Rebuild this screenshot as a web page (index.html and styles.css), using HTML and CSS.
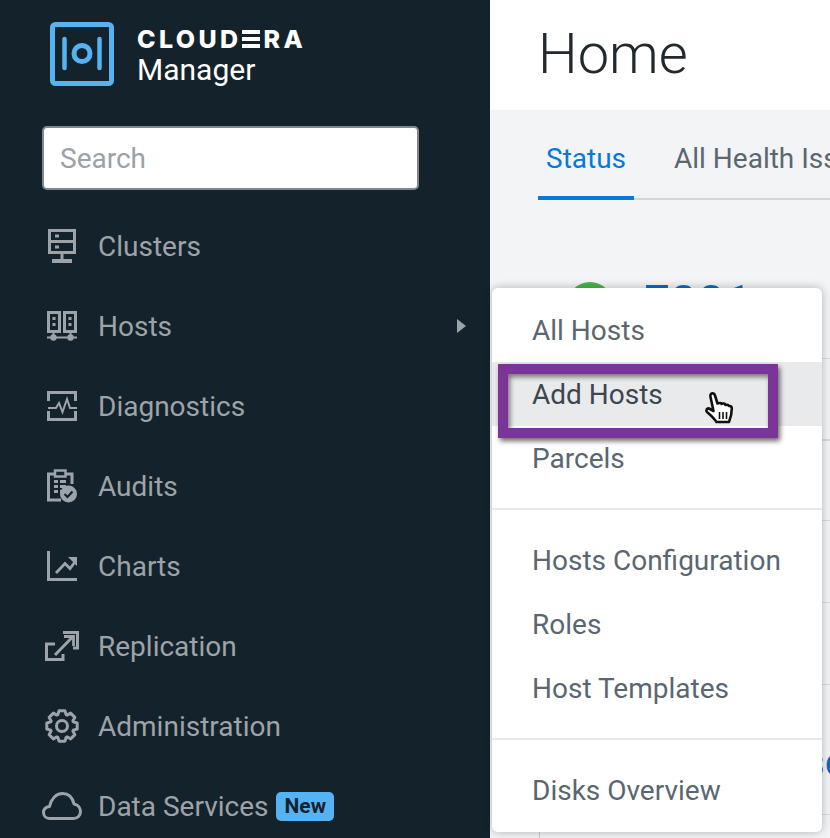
FILE: index.html
```html
<!DOCTYPE html>
<html lang="en">
<head>
  <meta charset="UTF-8" />
  <title>Cloudera Manager - Home</title>
  <link rel="stylesheet" href="styles.css">
</head>
<body>
  <div class="app">
    <aside class="sidebar">
      <div class="brand">
        <svg class="brand-logo" width="64" height="64" viewBox="0 0 64 64">
          <rect x="2.5" y="2.500" width="59" height="59" rx="3" fill="none" stroke="#55b3f3" stroke-width="5"/>
          <path d="M14.500 17v29M49.500 17v29" fill="none" stroke="#55b3f3" stroke-width="4.500" stroke-linecap="round"/>
          <circle cx="32" cy="31.500" r="8" fill="none" stroke="#55b3f3" stroke-width="5"/>
        </svg>
        <div class="brand-text">
          <div class="brand-name">CLOUD<span class="brand-e">E</span>RA</div>
          <div class="brand-product">Manager</div>
        </div>
      </div>

      <div class="search">Search</div>

      <nav class="nav">
        <a class="nav-item">
          <span class="nav-icon">
            <svg viewBox="0 0 28 34" width="28" height="34">
              <path d="M1.500 1.500h25v11h-25zM1.500 12.500h25v11h-25z" fill="none" stroke="#9da3a9" stroke-width="3"/>
              <path d="M14 24v7" fill="none" stroke="#9da3a9" stroke-width="3"/>
              <path d="M4 30h20v4H4z" fill="#9da3a9"/>
              <path d="M7 5.500h4v3H7zM7 16.500h4v3H7z" fill="#9da3a9"/>
            </svg>
          </span>
          <span>Clusters</span>
        </a>
        <a class="nav-item">
          <span class="nav-icon">
            <svg viewBox="0 0 30 30" width="30" height="30">
              <path d="M1.500 1.500h11v19h-11zM17.500 1.500h11v19h-11z" fill="none" stroke="#9da3a9" stroke-width="3"/>
              <path d="M5.500 6h3v3h-3zM5.500 12h3v3h-3zM21.500 6h3v3h-3zM21.500 12h3v3h-3z" fill="#9da3a9"/>
              <path d="M0 26.500h30M6.500 21v6M23.500 21v6" stroke="#9da3a9" stroke-width="2"/>
              <circle cx="6.500" cy="26.500" r="3.200" fill="#9da3a9"/>
              <circle cx="23.500" cy="26.500" r="3.200" fill="#9da3a9"/>
            </svg>
          </span>
          <span>Hosts</span>
          <span class="nav-arrow"></span>
        </a>
        <a class="nav-item">
          <span class="nav-icon">
            <svg viewBox="0 0 30 30" width="30" height="30">
              <path d="M1.500 10V1.500h27V10M1.500 20v8.500h27V20" fill="none" stroke="#9da3a9" stroke-width="3"/>
              <path d="M1 17h8l3-5 3.500 9L20 8l3 9h7" fill="none" stroke="#9da3a9" stroke-width="2"/>
            </svg>
          </span>
          <span>Diagnostics</span>
        </a>
        <a class="nav-item">
          <span class="nav-icon">
            <svg viewBox="0 0 30 34" width="30" height="34">
              <path d="M8 5H1.500v26H14M25 15V5h-6.500" fill="none" stroke="#9da3a9" stroke-width="3"/>
              <path d="M8 1.500h10.500v6H8z" fill="none" stroke="#9da3a9" stroke-width="2.500"/>
              <path d="M7 11h4v3H7zM13 11h6v3h-6zM7 16h4v3H7zM13 16h6v3h-6zM7 21h4v3H7zM13 21h2v3h-2z" fill="#9da3a9"/>
              <circle cx="21.500" cy="25" r="8.500" fill="#9da3a9"/>
              <path d="M17.500 25l3 3 5-5.500" fill="none" stroke="#14232b" stroke-width="2.200"/>
            </svg>
          </span>
          <span>Audits</span>
        </a>
        <a class="nav-item">
          <span class="nav-icon">
            <svg viewBox="0 0 30 30" width="30" height="30">
              <path d="M1.500 0v28.500H30" fill="none" stroke="#9da3a9" stroke-width="3"/>
              <path d="M9 22l9-9.500 5 5 6-8" fill="none" stroke="#9da3a9" stroke-width="2.800"/>
              <path d="M21 6h9v9z" fill="#9da3a9"/>
            </svg>
          </span>
          <span>Charts</span>
        </a>
        <a class="nav-item">
          <span class="nav-icon">
            <svg viewBox="0 0 34 30" width="34" height="30">
              <path d="M10 13H1.500v15.500H18V23" fill="none" stroke="#9da3a9" stroke-width="3"/>
              <path d="M18 1.500h14.500V17H28" fill="none" stroke="#9da3a9" stroke-width="3"/>
              <path d="M10 24L27 6.500" fill="none" stroke="#9da3a9" stroke-width="3"/>
              <path d="M19 5.500h9.500V15" fill="none" stroke="#9da3a9" stroke-width="2.800"/>
            </svg>
          </span>
          <span>Replication</span>
        </a>
        <a class="nav-item">
          <span class="nav-icon">
            <svg viewBox="-17 -17 34 34" width="34" height="34">
              <path d="M-4.100 -11.300L-3 -15.200H3L4.100 -11.300L5.090 -10.890L8.630 -12.870L12.870 -8.630L10.890 -5.090L11.300 -4.100L15.200 -3V3L11.300 4.100L10.890 5.090L12.870 8.630L8.630 12.870L5.090 10.890L4.100 11.300L3 15.200H-3L-4.100 11.300L-5.090 10.890L-8.630 12.870L-12.870 8.630L-10.890 5.090L-11.300 4.100L-15.200 3V-3L-11.300 -4.100L-10.890 -5.090L-12.870 -8.630L-8.630 -12.870L-5.090 -10.890z" fill="none" stroke="#9da3a9" stroke-width="3" stroke-linejoin="round"/>
              <circle r="5.500" fill="none" stroke="#9da3a9" stroke-width="3"/>
            </svg>
          </span>
          <span>Administration</span>
        </a>
        <a class="nav-item">
          <span class="nav-icon">
            <svg viewBox="0 0 40 28" width="40" height="28">
              <path d="M7.500 26.500C4 26.500 1.500 24 1.500 20.500S4 15 7.500 14.500C9 7 14 1.500 20.500 1.500c6 0 10 4 11.500 10.500 3.500 .5 6.500 3.500 6.500 7.500 0 4-3 7-7 7z" fill="none" stroke="#9da3a9" stroke-width="3" stroke-linejoin="round"/>
            </svg>
          </span>
          <span>Data Services</span>
          <span class="badge">New</span>
        </a>
      </nav>
    </aside>

    <main class="content">
      <header class="page-header">
        <h1>Home</h1>
      </header>
      <div class="page-body">
        <div class="tabs">
          <a class="tab tab-active">Status</a>
          <a class="tab">All Health Issues</a>
        </div>
        <div class="cluster-title">
          <span class="status-dot"></span>
          <span class="cluster-name">E001</span>
        </div>
      </div>
    </main>

    <!-- table rows that peek out from behind the menu -->
    <div class="backdrop-line line-a"></div>
    <div class="backdrop-line line-b"></div>
    <div class="backdrop-line line-c"></div>
    <div class="backdrop-line line-d"></div>
    <div class="backdrop-line line-e"></div>
    <div class="backdrop-line line-f"></div>
    <div class="backdrop-edge"></div>
    <div class="backdrop-letter">sc</div>

    <div class="menu">
      <div class="menu-group">
        <a class="menu-item">All Hosts</a>
        <a class="menu-item menu-item-hover">Add Hosts</a>
        <a class="menu-item">Parcels</a>
      </div>
      <div class="menu-group">
        <a class="menu-item">Hosts Configuration</a>
        <a class="menu-item">Roles</a>
        <a class="menu-item">Host Templates</a>
      </div>
      <div class="menu-group">
        <a class="menu-item">Disks Overview</a>
      </div>
    </div>

    <div class="callout"></div>

    <svg class="cursor" viewBox="0 0 32 36" width="32" height="36">
      <path d="M7 3c1.500-1.500 3.500-.5 4 1.500l2.500 8c2-1 3.500-.5 4 .5 1.500-1 3.500-.5 4 1 1.500-.5 3-.2 3.500 1 1.500-.3 2.800 .5 2.800 2.500 0 4-1 9-2.800 13.500H12.500c-2-3-6-7-9.500-10-1.500-1.500 0-4 2-3.500l4.500 2.500L6.500 6C6.200 5 6.300 3.700 7 3z" fill="#fff" stroke="#111" stroke-width="2.600" stroke-linejoin="round"/>
      <path d="M15.500 21v7M19 21v7M22.500 21v7" stroke="#111" stroke-width="1.600"/>
    </svg>
  </div>
</body>
</html>
```

FILE: styles.css
```css
/* Base styles */
html, body {
  margin: 0;
  padding: 0;
  height: 100%;
  overflow: hidden;
}

body {
  font-family: Roboto, 'Liberation Sans', sans-serif;
  background-color: #f3f4f6;
  color: #5a6670;
}

.app {
  position: relative;
  display: flex;
  height: 838px;
  overflow: hidden;
}

/* Sidebar */
.sidebar {
  flex: 0 0 490px;
  box-sizing: border-box;
  background-color: #14232b;
  padding: 22px 24px 0 42px;
}

.brand {
  display: flex;
  align-items: flex-start;
  gap: 23px;
  height: 64px;
  margin-left: 8px;
}

.brand-text {
  padding-top: 3px;
}

.brand-name {
  display: flex;
  color: white;
  font-family: Inter, sans-serif;
  font-size: 25px;
  font-weight: 800;
  line-height: 28px;
  letter-spacing: 3.4px;
}

/* The logotype's E is three plain bars */
.brand-e {
  align-self: center;
  width: 18px;
  height: 18px;
  margin-right: 4px;
  color: transparent;
  font-size: 18px;
  line-height: 18px;
  letter-spacing: 0;
  background: repeating-linear-gradient(white 0 4px, transparent 4px 7px);
}

.brand-product {
  color: white;
  font-size: 30px;
  line-height: 34px;
}

.search {
  box-sizing: border-box;
  width: 377px;
  height: 64px;
  margin-top: 40px;
  padding-left: 16px;
  background-color: white;
  border: 2px solid #7d8890;
  border-radius: 5px;
  color: #9aa1a8;
  font-size: 28px;
  line-height: 61px;
}

.nav {
  display: flex;
  flex-direction: column;
  margin-top: 16px;
}

.nav-item {
  display: flex;
  align-items: center;
  height: 80px;
  color: #9da3a9;
  font-size: 28px;
}

.nav-icon {
  display: flex;
  flex: none;
  justify-content: center;
  width: 40px;
  margin-right: 16px;
}

.nav-arrow {
  margin-left: auto;
  border-left: 9px solid #9da3a9;
  border-top: 7px solid transparent;
  border-bottom: 7px solid transparent;
}

.badge {
  margin-left: 8px;
  padding: 0 8px;
  background-color: #55b3f3;
  border-radius: 5px;
  color: #14232b;
  font-size: 21px;
  font-weight: 700;
  line-height: 29px;
}

/* Main */
.content {
  flex: 1;
  min-width: 0;
}

.page-header {
  height: 110px;
  background-color: white;
}

.page-header h1 {
  margin: 0;
  padding: 18px 0 0 48px;
  color: #22292e;
  font-size: 56px;
  font-weight: 300;
  line-height: 72px;
}

.page-body {
  padding: 0 0 0 48px;
}

.tabs {
  display: flex;
  height: 90px;
  box-sizing: border-box;
  border-bottom: 2px solid #d3d6d9;
}

.tab {
  padding: 31px 8px 0;
  margin-right: 32px;
  color: #5a6670;
  font-size: 28px;
  line-height: 36px;
  white-space: nowrap;
}

.tab-active {
  box-sizing: border-box;
  width: 96px;
  height: 90px;
  color: #0a78d6;
  border-bottom: 4px solid #0a78d6;
}

.cluster-title {
  display: flex;
  align-items: flex-start;
  gap: 29px;
  margin: 82px 0 0 29px;
}

.status-dot {
  flex: none;
  width: 46px;
  height: 46px;
  border-radius: 50%;
  background-color: #47b64a;
}

.cluster-name {
  color: #0a6cc4;
  font-size: 49px;
  line-height: 42px;
}

/* Things peeking out from behind the menu */
.backdrop-line {
  position: absolute;
  left: 780px;
  right: 0;
  height: 1px;
  background-color: #d8dadd;
}

.line-a { top: 358px; }
.line-b { top: 439px; height: 2px; }
.line-c { top: 520px; }
.line-d { top: 602px; }
.line-e { top: 684px; }
.line-f { top: 814px; }

.backdrop-edge {
  position: absolute;
  left: 539px;
  top: 780px;
  bottom: 0;
  width: 1px;
  background-color: #c9ccd0;
}

.backdrop-letter {
  position: absolute;
  left: 804px;
  top: 738px;
  color: #0a6cc4;
  font-size: 40px;
  line-height: 50px;
}

/* Menu */
.menu {
  position: absolute;
  left: 492px;
  top: 288px;
  width: 330px;
  height: 544px;
  background-color: white;
  border-radius: 6px;
  box-shadow: 0 0 10px rgba(0,0,0,0.28);
}

.menu-group {
  padding: 18px 0;
  border-bottom: 2px solid #eaeaec;
}

.menu-group:first-child {
  padding-top: 10px;
}

.menu-group:last-child {
  border-bottom: none;
}

.menu-item {
  display: block;
  height: 64px;
  padding-left: 40px;
  color: #5a6670;
  font-size: 28px;
  line-height: 66px;
}

.menu-item-hover {
  background-color: #e9eaec;
  color: #3c4650;
}

/* Callout drawn over the screenshot */
.callout {
  position: absolute;
  left: 498px;
  top: 364px;
  box-sizing: border-box;
  width: 280px;
  height: 74px;
  border: 10px solid #7a3596;
  box-shadow: 2px 3px 5px rgba(0,0,0,0.6), inset 2px 3px 5px rgba(0,0,0,0.5);
}

.cursor {
  position: absolute;
  left: 704px;
  top: 391px;
}
```
